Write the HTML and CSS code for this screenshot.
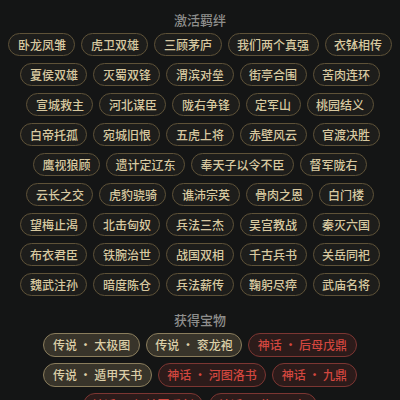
FILE: index.html
```html
<!DOCTYPE html>
<html lang="zh">
<head>
<meta charset="utf-8">
<link rel="stylesheet" href="styles.css">
</head>
<body>
<section class="section">
  <h2 class="title">激活羁绊</h2>
  <div class="pills">
    <span class="pill">卧龙凤雏</span>
    <span class="pill">虎卫双雄</span>
    <span class="pill">三顾茅庐</span>
    <span class="pill">我们两个真强</span>
    <span class="pill">衣钵相传</span>
    <span class="pill">夏侯双雄</span>
    <span class="pill">灭蜀双锋</span>
    <span class="pill">渭滨对垒</span>
    <span class="pill">街亭合围</span>
    <span class="pill">苦肉连环</span>
    <span class="pill">宣城救主</span>
    <span class="pill">河北谋臣</span>
    <span class="pill">陇右争锋</span>
    <span class="pill">定军山</span>
    <span class="pill">桃园结义</span>
    <span class="pill">白帝托孤</span>
    <span class="pill">宛城旧恨</span>
    <span class="pill">五虎上将</span>
    <span class="pill">赤壁风云</span>
    <span class="pill">官渡决胜</span>
    <span class="pill">鹰视狼顾</span>
    <span class="pill">遗计定辽东</span>
    <span class="pill">奉天子以令不臣</span>
    <span class="pill">督军陇右</span>
    <span class="pill">云长之交</span>
    <span class="pill">虎豹骁骑</span>
    <span class="pill">谯沛宗英</span>
    <span class="pill">骨肉之恩</span>
    <span class="pill">白门楼</span>
    <span class="pill">望梅止渴</span>
    <span class="pill">北击匈奴</span>
    <span class="pill">兵法三杰</span>
    <span class="pill">吴宫教战</span>
    <span class="pill">秦灭六国</span>
    <span class="pill">布衣君臣</span>
    <span class="pill">铁腕治世</span>
    <span class="pill">战国双相</span>
    <span class="pill">千古兵书</span>
    <span class="pill">关岳同祀</span>
    <span class="pill">魏武注孙</span>
    <span class="pill">暗度陈仓</span>
    <span class="pill">兵法薪传</span>
    <span class="pill">鞠躬尽瘁</span>
    <span class="pill">武庙名将</span>
  </div>
</section>
<section class="section treasures">
  <h2 class="title">获得宝物</h2>
  <div class="pills">
    <span class="pill legend">传说 · 太极图</span>
    <span class="pill legend">传说 · 衮龙袍</span>
    <span class="pill myth">神话 · 后母戊鼎</span>
    <span class="pill legend">传说 · 遁甲天书</span>
    <span class="pill myth">神话 · 河图洛书</span>
    <span class="pill myth">神话 · 九鼎</span>
    <span class="pill myth">神话 · 轩辕夏禹剑</span>
    <span class="pill myth">神话 · 传国玉玺</span>
  </div>
</section>
</body>
</html>
```

FILE: styles.css
```css
html, body {
  margin: 0;
  padding: 0;
  background: #141515;
}

body {
  font-family: "Noto Sans CJK SC", "Noto Sans", sans-serif;
  height: 400px;
  overflow: hidden;
}

.section {
  padding: 10px 8px 0;
}

.treasures {
  padding-top: 14px;
}

.title {
  margin: 0 0 3px;
  font-size: 13px;
  line-height: 20px;
  font-weight: 500;
  color: #8e8e8c;
  text-align: center;
}

.pills {
  display: flex;
  flex-wrap: wrap;
  justify-content: center;
  column-gap: 6px;
  row-gap: 7px;
}

.pill {
  box-sizing: border-box;
  height: 23px;
  line-height: 21px;
  padding: 0 8.5px;
  font-size: 12px;
  font-weight: 500;
  color: #d8c9a0;
  background: #1d1d1b;
  border: 1px solid #5e5238;
  border-radius: 12px;
  white-space: pre;
}

.treasures .pill {
  height: 24px;
  line-height: 22px;
}

.treasures .pills {
  row-gap: 6px;
}

.pill.legend {
  background: #38342a;
  border-color: #8a7d5c;
  color: #dccfa8;
}

.pill.myth {
  background: #2c1b1a;
  border-color: #7c3632;
  color: #d2473f;
}
```
